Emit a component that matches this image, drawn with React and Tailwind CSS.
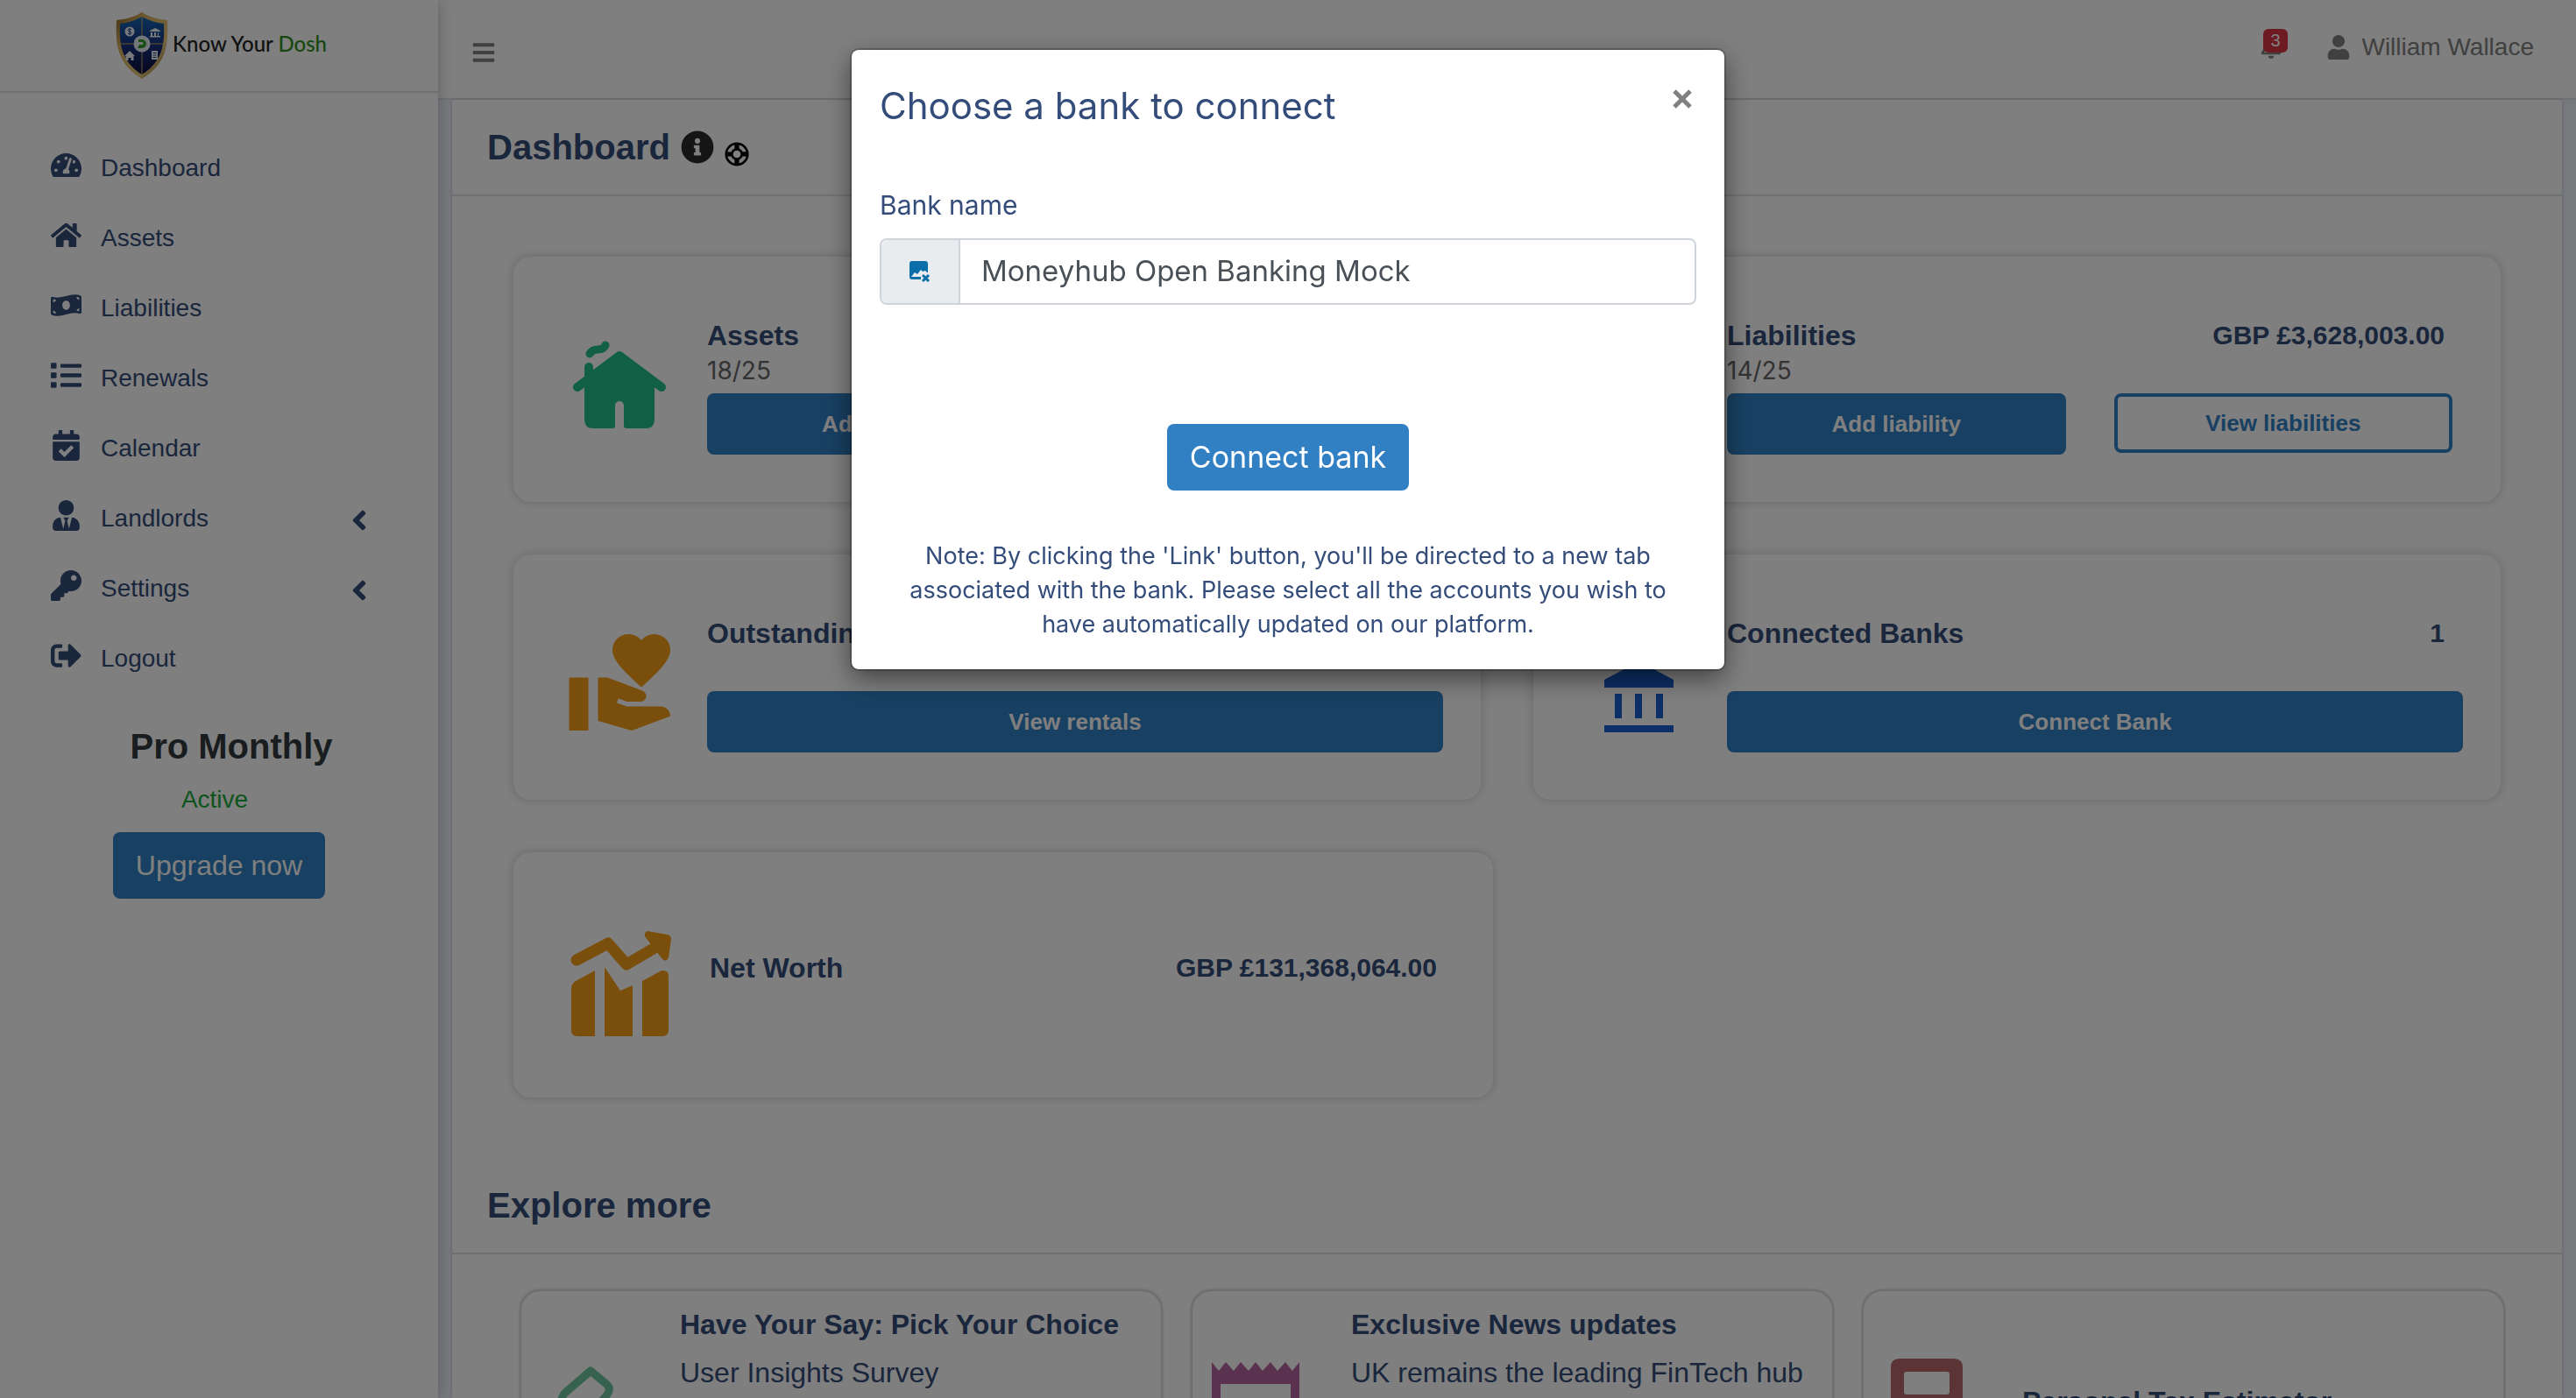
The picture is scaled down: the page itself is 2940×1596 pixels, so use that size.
import { FaTachometerAlt, FaHome, FaMoneyBillWave, FaList, FaCalendarCheck, FaUserTie, FaKey, FaSignOutAlt, FaAngleLeft, FaInfoCircle, FaRegLifeRing, FaUser, FaRegBell, FaBars } from "react-icons/fa";
import { MdVolunteerActivism } from "react-icons/md";

const NAV = [
  { label: "Dashboard", Icon: FaTachometerAlt },
  { label: "Assets", Icon: FaHome },
  { label: "Liabilities", Icon: FaMoneyBillWave },
  { label: "Renewals", Icon: FaList },
  { label: "Calendar", Icon: FaCalendarCheck },
  { label: "Landlords", Icon: FaUserTie, sub: true },
  { label: "Settings", Icon: FaKey, sub: true },
  { label: "Logout", Icon: FaSignOutAlt },
];

function Shield() {
  return (
    <svg viewBox="0 0 60 76" className="h-[76px] w-[60px]" aria-hidden="true">
      <defs>
        <linearGradient id="gold" x1="0" y1="0" x2="1" y2="1">
          <stop offset="0" stopColor="#8a6420" />
          <stop offset="0.3" stopColor="#d9b25f" />
          <stop offset="0.7" stopColor="#e6c67c" />
          <stop offset="1" stopColor="#7a5518" />
        </linearGradient>
        <linearGradient id="navy" x1="0" y1="0" x2="0" y2="1">
          <stop offset="0" stopColor="#1668b4" />
          <stop offset="0.5" stopColor="#16307e" />
          <stop offset="1" stopColor="#0b0f3c" />
        </linearGradient>
      </defs>
      <path d="M30 0 C22 5 12 8 1 9 C0 34 0 58 30 76 C60 58 60 34 59 9 C48 8 38 5 30 0Z" fill="url(#gold)" />
      <path d="M30 5 C23 9 14 12 5 13 C4 36 6 56 30 71 C54 56 56 36 55 13 C46 12 37 9 30 5Z" fill="url(#navy)" />
      <path d="M30 5V71M5 36H55" stroke="#c9a35a" strokeWidth="1" />
      <circle cx="30" cy="36" r="9.500" fill="#e8eef5" />
      <path d="M26 31h4a5 5 0 0 1 0 10h-5l2-4h3a1.500 1.500 0 0 0 0-3h-4z" fill="#2f9e2a" />
      <circle cx="16" cy="22" r="5.500" fill="#f1f5fa" />
      <path d="M18 20c-1-1.500-4-1-4 .500s4 1 4 3-3 2-4 .500M16 18v8" stroke="#24407e" strokeWidth="1" fill="none" />
      <path d="M39 21l6-3 6 3v1H39zM40 23h2v4h-2zM44 23h2v4h-2zM48 23h1v4h-1zM39 27h12v1.500H39z" fill="#f1f5fa" />
      <path d="M10 50l6-6 6 6h-1.500v5h-3v-3h-3v3h-3v-5z" fill="#f1f5fa" />
      <path d="M41 44h7v10h-7z" fill="#f1f5fa" />
      <path d="M42.500 46.500h4M42.500 49h4M42.500 51.500h4" stroke="#24407e" strokeWidth="1" />
    </svg>
  );
}

function HouseIcon() {
  return (
    <svg viewBox="0 0 106 100" className="h-[100px] w-[106px]" fill="#22c08a" aria-hidden="true">
      <path d="M53 16 L93 46 V90 Q93 100 83 100 H61 Q58 100 58 97 V74 A5 5 0 0 0 48 74 V97 Q48 100 45 100 H23 Q13 100 13 90 V46Z" />
      <path d="M5 53 L53 17 L101 53" fill="none" stroke="#22c08a" strokeWidth="10" strokeLinecap="round" strokeLinejoin="round" />
      <path d="M18 30 V60" stroke="#22c08a" strokeWidth="10" strokeLinecap="round" />
      <path d="M19 15 Q22 10 28 10 Q35 10 37 5" fill="none" stroke="#22c08a" strokeWidth="9" strokeLinecap="round" />
    </svg>
  );
}

function BankIcon() {
  return (
    <svg viewBox="0 0 79 81" className="mt-8 h-[81px] w-[79px]" fill="#1a5fd0" aria-hidden="true">
      <path d="M39.500 0L79 21V30H0V21ZM12 37h8v28h-8zM35 37h8v28h-8zM59 37h8v28h-8zM0 73h79v8H0z" />
    </svg>
  );
}

function ChartIcon() {
  return (
    <svg viewBox="0 0 116 120" className="ml-1 mt-2 h-[120px] w-[116px]" fill="#f59c17" aria-hidden="true">
      <path d="M7 33 L43 14 L64 38 L98 18" fill="none" stroke="#f59c17" strokeWidth="13" strokeLinejoin="round" strokeLinecap="round" />
      <path d="M88 0 L111 4 Q115 5 115 9 L112 30 Q110 36 105 32 L85 6 Q84 1 88 0Z" />
      <path d="M1 66 Q1 60 6 57 L28 45 V120 H8 Q1 120 1 113Z" />
      <path d="M39 41 L57 68 L71 62 V120 H39Z" />
      <path d="M82 57 L104 45 Q112 44 112 51 V113 Q112 120 105 120 H82Z" />
    </svg>
  );
}

function Card({ icon, children }) {
  return (
    <section className="flex min-h-[280px] items-center rounded-[20px] bg-white pr-[43px] shadow-[0_0_12px_rgba(0,0,0,0.2)]">
      <div className="flex w-[221px] shrink-0 justify-center pl-5 pt-3">{icon}</div>
      <div className="min-w-0 flex-1">{children}</div>
    </section>
  );
}

function CardHead({ title, value }) {
  return (
    <div className="flex items-center justify-between pr-[21px] font-bold text-[#344c79]">
      <h2 className="text-[32px] leading-[40px]">{title}</h2>
      <span className="text-[30px] leading-[40px]">{value}</span>
    </div>
  );
}

const SOLID = "h-[70px] w-full rounded-lg bg-[#3180c4] text-[26px] font-bold text-white";

function Money({ icon, title, value, count, add, view }) {
  return (
    <Card icon={icon}>
      <div className="pt-4">
        <CardHead title={title} value={value} />
        <p className="font-['Inter',sans-serif] text-[28px] leading-[40px] text-[#666]">{count}</p>
        <div className="mt-[6px] grid grid-cols-2 items-start gap-[55px] pr-3">
          <button className={SOLID}>{add}</button>
          <button className="h-[68px] rounded-lg border-4 border-[#3180c4] text-[26px] font-bold text-[#3180c4]">{view}</button>
        </div>
      </div>
    </Card>
  );
}

function Action({ icon, title, value, action }) {
  return (
    <Card icon={icon}>
      <div className="pt-4">
        <CardHead title={title} value={value} />
        <button className={`mt-[46px] ${SOLID}`}>{action}</button>
      </div>
    </Card>
  );
}

function Explore({ icon, title, text }) {
  return (
    <article className="flex h-[256px] items-center rounded-[24px] border-2 border-[#dcdcdc] bg-white shadow-[0_0_3px_rgba(0,0,0,0.2)]">
      <div className="w-[181px] shrink-0">{icon}</div>
      <div className="h-full flex-1 text-[32px] text-[#344c79]">
        {text ? (
          <>
            <h3 className="pt-[18px] font-bold leading-[40px]">{title}</h3>
            <p className="mt-[10px] leading-[50px]">{text}</p>
          </>
        ) : (
          <h3 className="flex h-full items-center font-bold leading-[40px]">{title}</h3>
        )}
      </div>
    </article>
  );
}

function ConnectModal() {
  return (
    <div className="fixed inset-0 z-50 flex items-start justify-center bg-black/50 pt-[57px]">
      <div role="dialog" aria-label="Choose a bank to connect" className="w-[996px] rounded-lg bg-white px-8 pb-8 pt-[36px] font-['Inter',sans-serif] text-[#344c79] shadow-[0_10px_30px_rgba(0,0,0,0.5),0_0_0_2px_rgba(0,0,0,0.2)]">
        <div className="flex items-start justify-between">
          <h2 className="text-[42px] leading-[56px]">Choose a bank to connect</h2>
          <button aria-label="Close" className="pr-[5px] pt-[9px] text-[#808080]">
            <svg viewBox="0 0 22 22" className="size-[22px]" stroke="currentColor" strokeWidth="5"><path d="M2 2L20 20M20 2L2 20" /></svg>
          </button>
        </div>
        <label htmlFor="bank" className="mt-16 block text-[30px] leading-[42px]">Bank name</label>
        <div className="mt-[17px] flex h-[76px] overflow-hidden rounded-lg border-2 border-[#ced4da]">
          <span className="flex w-[90px] items-center justify-center border-r-2 border-[#ced4da] bg-[#e9ecef]">
            <svg viewBox="0 0 24 24" className="size-6" aria-hidden="true">
              <path d="M3 0h15q3 0 3 3v10h-8v8H3q-3 0-3-3V3q0-3 3-3z" fill="#0b6ea8" />
              <path d="M2 18l4-5 3 2 4-5 2 2 3-1 3 3v3h-8v1z" fill="#e9ecef" />
              <path d="M15 16l7 7M22 16l-7 7" stroke="#0b6ea8" strokeWidth="3" />
            </svg>
          </span>
          <input id="bank" defaultValue="Moneyhub Open Banking Mock" className="min-w-0 flex-1 px-6 text-[33px] text-[#495057]" />
        </div>
        <div className="mt-[136px] flex justify-center">
          <button className="h-[76px] rounded-lg bg-[#3180c4] px-[26px] pb-[2px] text-[34px] text-white">Connect bank</button>
        </div>
        <p className="mt-[55px] text-center text-[27px] leading-[39px]">
          Note: By clicking the 'Link' button, you'll be directed to a new tab associated with the bank. Please select all the accounts you wish to have automatically updated on our platform.
        </p>
      </div>
    </div>
  );
}

export default function App() {
  return (
    <div className="flex h-screen overflow-hidden bg-[#eef3fb] font-['Liberation_Sans',Arial,sans-serif]">
      <aside className="z-10 flex w-[500px] shrink-0 flex-col bg-white shadow-[0_0_16px_rgba(0,0,0,0.25)]">
        <a href="#" className="flex h-[106px] items-center border-b-2 border-[#dee2e6] pl-[132px]">
          <Shield />
          <span className="whitespace-nowrap pb-1 pl-[5px] font-['Lato',sans-serif] text-[24px] font-medium text-[#222]">
            Know Your <span className="text-[#2f8f1d]">Dosh</span>
          </span>
        </a>
        <nav className="mt-[46px] text-[28px] text-[#344c79]">
          {NAV.map(({ label, Icon, sub }) => (
            <a key={label} href="#" className="flex h-20 items-center pl-[50px] pr-[72px]">
              <span className="flex w-[50px] justify-center pb-2"><Icon className="h-[35px] w-auto shrink-0" /></span>
              <span className="flex-1 pl-[15px]">{label}</span>
              {sub && <FaAngleLeft className="mt-1 size-9" />}
            </a>
          ))}
        </nav>
        <div className="mt-[36px] flex flex-col items-center">
          <h2 className="pl-7 text-[40px] font-bold leading-[48px] text-[#343a40]">Pro Monthly</h2>
          <p className="mt-4 pr-[10px] text-[28px] leading-[42px] text-[#20a83a]">Active</p>
          <button className="mt-4 h-[76px] rounded-lg bg-[#3180c4] px-[26px] text-[32px] text-white">Upgrade now</button>
        </div>
      </aside>

      <div className="flex min-w-0 flex-1 flex-col">
        <header className="flex h-[114px] shrink-0 items-center border-b-2 border-[#dee2e6] bg-white pb-1 pl-[38px] pr-12 text-[#808080]">
          <button aria-label="Menu"><FaBars className="mt-3 size-7" /></button>
          <button aria-label="Notifications" className="relative ml-auto mr-[50px]">
            <FaRegBell className="size-[26px]" />
            <span className="absolute -top-2 left-1 rounded-md bg-[#dc3545] px-2 text-[20px] leading-[27px] text-white">3</span>
          </button>
          <a href="#" className="flex items-center gap-3 text-[28px]"><FaUser className="size-7" />William Wallace</a>
        </header>

        <main className="mx-4 flex-1 overflow-hidden bg-white shadow-[0_0_4px_rgba(0,0,0,0.2)]">
          <div className="flex h-[110px] items-center border-b-2 border-[#dee2e6] pl-10">
            <h1 className="text-[40px] font-bold text-[#344c79]">Dashboard</h1>
            <FaInfoCircle className="ml-3 size-[38px] text-[#2a2a2a]" />
            <FaRegLifeRing className="ml-3 mt-4 size-7 rotate-45 text-black" />
          </div>

          <div className="grid grid-cols-2 gap-[60px] px-[70px] pt-[69px]">
            <Money icon={<HouseIcon />} title="Assets" value="GBP £134,996,067.00" count="18/25" add="Add asset" view="View assets" />
            <Money icon={<BankIcon />} title="Liabilities" value="GBP £3,628,003.00" count="14/25" add="Add liability" view="View liabilities" />
            <Action icon={<MdVolunteerActivism className="ml-[6px] size-[132px] text-[#f59c17]" />} title="Outstanding" action="View rentals" />
            <Action icon={<BankIcon />} title="Connected Banks" value="1" action="Connect Bank" />
            <div className="-mr-[14px]">
              <Card icon={<ChartIcon />}>
                <div className="pb-4 pl-[3px]">
                  <CardHead title="Net Worth" value="GBP £131,368,064.00" />
                </div>
              </Card>
            </div>
          </div>

          <div className="mt-[69px] flex h-[110px] items-center border-b-2 border-[#dcdcdc] pl-10">
            <h2 className="text-[40px] font-bold text-[#344c79]">Explore more</h2>
          </div>
          <div className="grid grid-cols-3 gap-8 pl-[77px] pr-[65px] pt-10">
            <Explore
              title="Have Your Say: Pick Your Choice"
              text="User Insights Survey"
              icon={
                <svg viewBox="0 0 106 106" className="ml-9 size-[106px]" fill="none" stroke="#6fc4a0" strokeWidth="9" strokeLinejoin="round"><path d="M43 18L61 33Q67 38 62 45L32 82L8 60Q10 46 14 43Z" /></svg>
              }
            />
            <Explore
              title="Exclusive News updates"
              text="UK remains the leading FinTech hub"
              icon={
                <svg viewBox="0 0 100 90" className="ml-[22px] h-[90px] w-[100px]" fill="#b4629c"><path fillRule="evenodd" d="M0 0L8 10L16 0L25 10L33 0L42 10L50 0L58 10L67 0L75 10L84 0L92 10L100 0V90H0ZM10 25V80H90V25Z" /></svg>
              }
            />
            <Explore
              title="Personal Tax Estimator"
              icon={
                <svg viewBox="0 0 82 98" className="ml-[31px] h-[98px] w-[82px]" fill="#b8686c"><path fillRule="evenodd" d="M10 0H72Q82 0 82 10V98H0V10Q0 0 10 0ZM18 15Q15 15 15 18V38Q15 41 18 41H64Q67 41 67 38V18Q67 15 64 15Z" /></svg>
              }
            />
          </div>
        </main>
      </div>
      <ConnectModal />
    </div>
  );
}
